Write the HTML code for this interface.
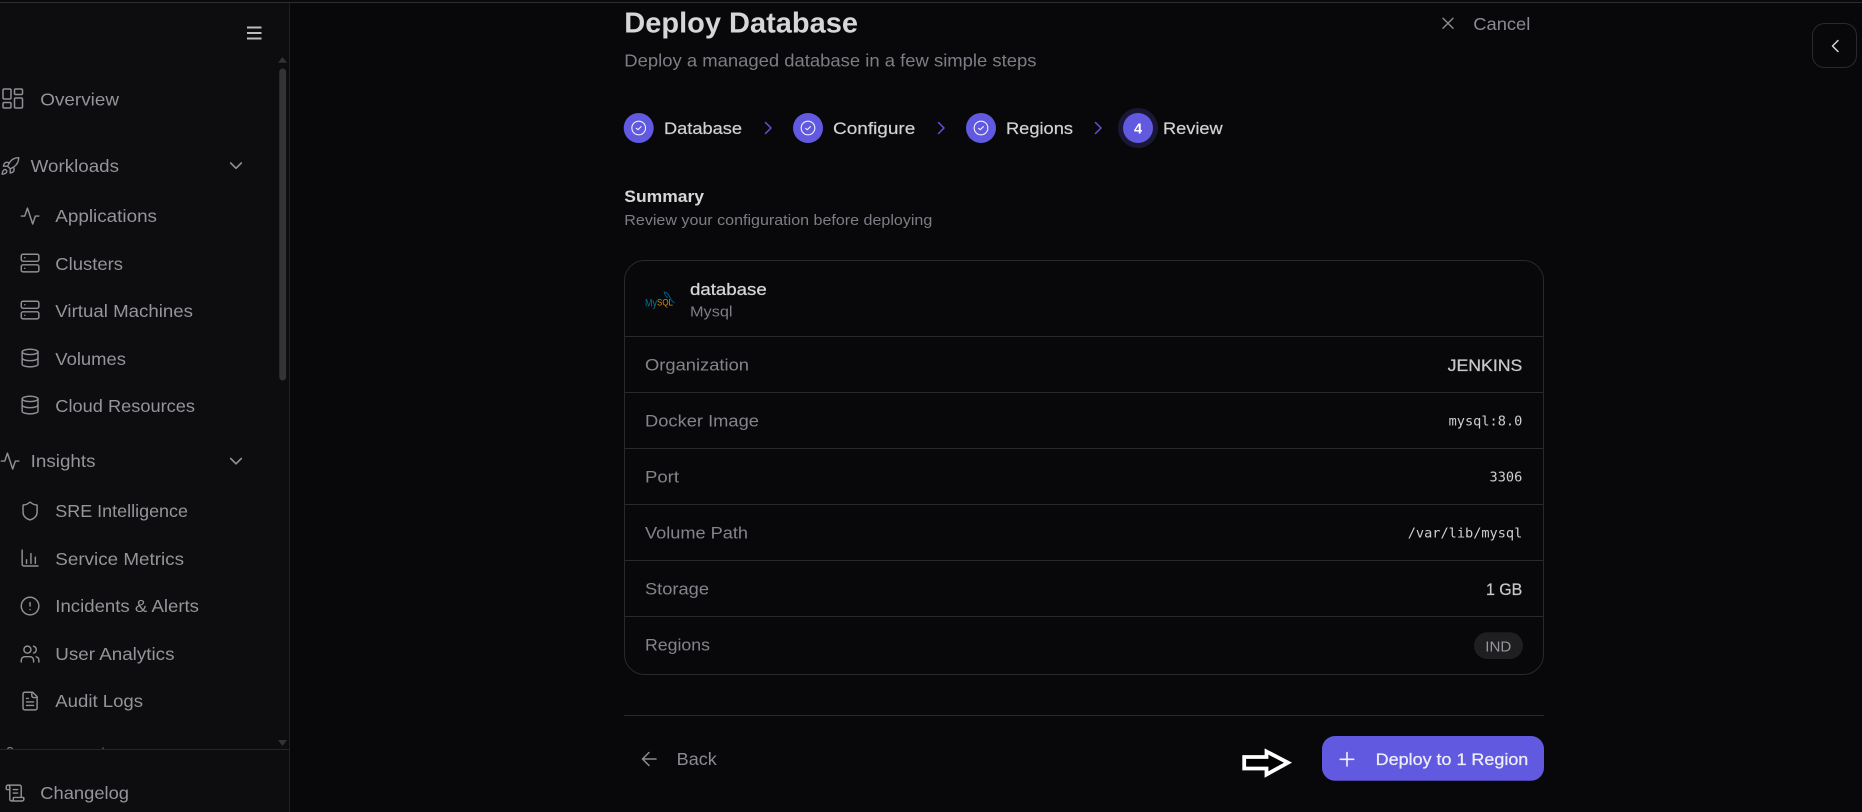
<!DOCTYPE html>
<html lang="en">
<head>
<meta charset="utf-8">
<title>Deploy Database</title>
<style>
html,body{margin:0;padding:0;background:#08080a;width:1862px;height:812px;overflow:hidden}
svg{display:block}
text{font-family:"Liberation Sans",sans-serif}
.nav{font-size:17.5px;fill:#94959b}
.ic{fill:none;stroke:#8f9095;stroke-width:1.65;stroke-linecap:round;stroke-linejoin:round}
.lab{font-size:17px;fill:#84858c}
.val{font-size:17px;fill:#c8c8ca;stroke:#c8c8ca;stroke-width:.25}
.mono{font-family:"DejaVu Sans Mono","Liberation Mono",monospace;font-size:13.6px;fill:#cfcfd1}
.step{font-size:17px;fill:#d2d2d4;stroke:#d2d2d4;stroke-width:.2}
.ln{stroke:#29292c;stroke-width:1}
.w{fill:none;stroke:#f2f2fa;stroke-width:1.6;stroke-linecap:round;stroke-linejoin:round}
.chev{fill:none;stroke:#5d55d8;stroke-width:1.5;stroke-linecap:round;stroke-linejoin:round}
</style>
</head>
<body>
<svg xmlns="http://www.w3.org/2000/svg" width="1862" height="812" viewBox="0 0 1862 812">
<defs>
<g id="activity"><polyline points="22 12 18 12 15 21 9 3 6 12 2 12"/></g>
<g id="server"><rect width="20" height="8" x="2" y="2" rx="2"/><rect width="20" height="8" x="2" y="14" rx="2"/><line x1="6" y1="6" x2="6.01" y2="6"/><line x1="6" y1="18" x2="6.01" y2="18"/></g>
<g id="db"><ellipse cx="12" cy="5" rx="9" ry="3"/><path d="M3 5V19A9 3 0 0 0 21 19V5"/><path d="M3 12A9 3 0 0 0 21 12"/></g>
<g id="check"><circle cx="12" cy="12" r="10"/><path d="m8.5 12.5 2.5 2 4.5-4.5"/></g>
</defs>

<rect width="1862" height="812" fill="#08080a"/>
<rect x="0" y="0" width="290" height="812" fill="#0d0d0f"/>
<rect x="289" y="0" width="1" height="812" fill="#1f1f22"/>
<rect x="0" y="0" width="1862" height="2" fill="#0a0a0c"/>
<rect x="0" y="2" width="1862" height="1" fill="#2e2e30"/>

<!-- Hamburger -->
<path d="M247 27.5h14.5M247 33h14.5M247 38.5h14.5" fill="none" stroke="#bcbcbe" stroke-width="1.9"/>

<!-- Scrollbar -->
<rect x="279.3" y="68.5" width="6.8" height="312" rx="3.4" fill="#343436"/>
<path d="M278 62.7h9l-4.5-5.7z" fill="#333335"/>
<path d="M278 740h9l-4.5 6z" fill="#333335"/>

<!-- Nav text -->
<text class="nav" x="40.3" y="105.5" textLength="78.7" lengthAdjust="spacingAndGlyphs">Overview</text>
<text class="nav" x="30.7" y="172" textLength="88.3" lengthAdjust="spacingAndGlyphs">Workloads</text>
<text class="nav" x="55.3" y="222" textLength="101.7" lengthAdjust="spacingAndGlyphs">Applications</text>
<text class="nav" x="55.3" y="270" textLength="67.7" lengthAdjust="spacingAndGlyphs">Clusters</text>
<text class="nav" x="55.3" y="317" textLength="137.7" lengthAdjust="spacingAndGlyphs">Virtual Machines</text>
<text class="nav" x="55.3" y="365" textLength="70.7" lengthAdjust="spacingAndGlyphs">Volumes</text>
<text class="nav" x="55.3" y="412" textLength="139.7" lengthAdjust="spacingAndGlyphs">Cloud Resources</text>
<text class="nav" x="30.7" y="467" textLength="64.8" lengthAdjust="spacingAndGlyphs">Insights</text>
<text class="nav" x="55.3" y="517" textLength="132.7" lengthAdjust="spacingAndGlyphs">SRE Intelligence</text>
<text class="nav" x="55.3" y="565" textLength="128.7" lengthAdjust="spacingAndGlyphs">Service Metrics</text>
<text class="nav" x="55.3" y="612" textLength="143.7" lengthAdjust="spacingAndGlyphs">Incidents &amp; Alerts</text>
<text class="nav" x="55.3" y="660" textLength="119.2" lengthAdjust="spacingAndGlyphs">User Analytics</text>
<text class="nav" x="55.3" y="707" textLength="87.7" lengthAdjust="spacingAndGlyphs">Audit Logs</text>
<text class="nav" x="40.3" y="799" textLength="88.7" lengthAdjust="spacingAndGlyphs">Changelog</text>

<!-- Nav icons -->
<g class="ic" transform="translate(0.5,86.5)"><rect x="2.5" y="2.5" width="8" height="10" rx="1.2" stroke-width="1.5"/><rect x="14" y="2.5" width="8" height="5.5" rx="1.2" stroke-width="1.5"/><rect x="14" y="11.5" width="8" height="10" rx="1.2" stroke-width="1.5"/><rect x="2.5" y="16" width="8" height="5.5" rx="1.2" stroke-width="1.5"/></g>
<g class="ic" transform="translate(0,156) scale(.85)" stroke-width="1.7"><path d="M4.5 16.5c-1.5 1.26-2 5-2 5s3.74-.5 5-2c.71-.84.7-2.13-.09-2.91a2.18 2.18 0 0 0-2.91-.09z"/><path d="m12 15-3-3a22 22 0 0 1 2-3.95A12.88 12.88 0 0 1 22 2c0 2.72-.78 7.5-6 11a22.35 22.35 0 0 1-4 2z"/><path d="M9 12H4s.55-3.03 2-4c1.62-1.08 5 0 5 0"/><path d="M12 15v5s3.03-.55 4-2c1.08-1.62 0-5 0-5"/></g>
<use href="#activity" class="ic" transform="translate(19.5,205.5) scale(.88)"/>
<use href="#server" class="ic" transform="translate(19.5,252.5) scale(.88)"/>
<use href="#server" class="ic" transform="translate(19.5,299.5) scale(.88)"/>
<use href="#db" class="ic" transform="translate(19.5,347.5) scale(.88)"/>
<use href="#db" class="ic" transform="translate(19.5,394.5) scale(.88)"/>
<use href="#activity" class="ic" transform="translate(-0.5,450.5) scale(.88)"/>
<g class="ic" transform="translate(19.5,500.5) scale(.88)"><path d="M20 13c0 5-3.5 7.5-7.66 8.95a1 1 0 0 1-.67-.01C7.5 20.5 4 18 4 13V6a1 1 0 0 1 1-1c2 0 4.5-1.2 6.24-2.72a1.17 1.17 0 0 1 1.52 0C14.51 3.81 17 5 19 5a1 1 0 0 1 1 1z"/></g>
<g class="ic" transform="translate(19.5,547.5) scale(.88)"><path d="M3 3v16a2 2 0 0 0 2 2h16"/><path d="M8 18v-4M13 18V7M18 18v-7"/></g>
<g class="ic" transform="translate(19.5,595.5) scale(.88)"><circle cx="12" cy="12" r="10"/><line x1="12" y1="8" x2="12" y2="12"/><line x1="12" y1="16" x2="12.01" y2="16"/></g>
<g class="ic" transform="translate(19.5,643.5) scale(.88)"><path d="M16 21v-2a4 4 0 0 0-4-4H6a4 4 0 0 0-4 4v2"/><circle cx="9" cy="7" r="4"/><path d="M22 21v-2a4 4 0 0 0-3-3.87"/><path d="M16 3.13a4 4 0 0 1 0 7.75"/></g>
<g class="ic" transform="translate(19.5,690.5) scale(.88)"><path d="M15 2H6a2 2 0 0 0-2 2v16a2 2 0 0 0 2 2h12a2 2 0 0 0 2-2V7Z"/><path d="M14 2v4a2 2 0 0 0 2 2h4"/><path d="M10 9H8"/><path d="M16 13H8"/><path d="M16 17H8"/></g>
<g class="ic" transform="translate(4.5,782.5) scale(.88)"><path d="M15 12h-5"/><path d="M15 8h-5"/><path d="M19 17V5a2 2 0 0 0-2-2H4"/><path d="M8 21h12a2 2 0 0 0 2-2v-1a1 1 0 0 0-1-1H11a1 1 0 0 0-1 1v1a2 2 0 1 1-4 0V5a2 2 0 1 0-4 0v2a1 1 0 0 0 1 1h3"/></g>

<!-- Section chevrons -->
<path d="M230.7 163l5.3 5.3 5.3-5.3" class="ic" stroke-width="1.3"/>
<path d="M230.7 458.5l5.3 5.3 5.3-5.3" class="ic" stroke-width="1.3"/>

<!-- Clipped next group sliver + footer divider -->
<path d="M7.5 749c1-2 4-2 5 0" fill="none" stroke="#77777c" stroke-width="1.3"/>
<rect x="102.5" y="747.5" width="1.2" height="1.5" fill="#66666a"/>
<rect x="0" y="749" width="289" height="1" fill="#252528"/>

<!-- Header -->
<text x="624.3" y="32.5" font-size="29" font-weight="700" fill="#d6d6d8" textLength="233.7" lengthAdjust="spacingAndGlyphs">Deploy Database</text>
<text x="624.3" y="66.7" font-size="17.5" fill="#7d7e85" textLength="412.2" lengthAdjust="spacingAndGlyphs">Deploy a managed database in a few simple steps</text>
<path d="M1443 18.3l10 10M1453 18.3l-10 10" fill="none" stroke="#8b8b90" stroke-width="1.4" stroke-linecap="round"/>
<text x="1473.3" y="30" font-size="17.5" fill="#8a8b93" textLength="57" lengthAdjust="spacingAndGlyphs">Cancel</text>

<!-- Collapse button -->
<rect x="1812.5" y="23.5" width="44" height="44" rx="12" fill="#08080a" stroke="#2a2a2d" stroke-width="1"/>
<path d="M1838 40.5l-5.5 5.5 5.5 5.5" fill="none" stroke="#d4d4d6" stroke-width="1.5" stroke-linecap="round" stroke-linejoin="round"/>

<!-- Stepper -->
<circle cx="638.7" cy="128" r="15" fill="#6159e0"/>
<use href="#check" class="w" transform="translate(630.5,119.8) scale(.683)" stroke-width="2"/>
<text class="step" x="664" y="134" textLength="78" lengthAdjust="spacingAndGlyphs">Database</text>
<path d="M765.5 122.5l5.5 5.5-5.5 5.5" class="chev"/>

<circle cx="808" cy="128" r="15" fill="#6159e0"/>
<use href="#check" class="w" transform="translate(799.8,119.8) scale(.683)" stroke-width="2"/>
<text class="step" x="833" y="134" textLength="82.3" lengthAdjust="spacingAndGlyphs">Configure</text>
<path d="M938.5 122.5l5.5 5.5-5.5 5.5" class="chev"/>

<circle cx="981" cy="128" r="15" fill="#6159e0"/>
<use href="#check" class="w" transform="translate(972.8,119.8) scale(.683)" stroke-width="2"/>
<text class="step" x="1006" y="134" textLength="67" lengthAdjust="spacingAndGlyphs">Regions</text>
<path d="M1095.5 122.5l5.5 5.5-5.5 5.5" class="chev"/>

<circle cx="1138" cy="128" r="20" fill="#1a1836"/>
<circle cx="1138" cy="128" r="15" fill="#6159e0"/>
<text x="1138" y="133.3" font-size="14.5" font-weight="700" fill="#ffffff" text-anchor="middle">4</text>
<text class="step" x="1163" y="134" textLength="59.6" lengthAdjust="spacingAndGlyphs">Review</text>

<!-- Summary -->
<text x="624.3" y="202" font-size="17" font-weight="700" fill="#d6d6d8" textLength="79.7" lengthAdjust="spacingAndGlyphs">Summary</text>
<text x="624.3" y="225" font-size="14.5" fill="#7d7e85" textLength="308" lengthAdjust="spacingAndGlyphs">Review your configuration before deploying</text>

<!-- Card -->
<rect x="624.5" y="260.5" width="919" height="414" rx="20" fill="#08080a" stroke="#29292c" stroke-width="1"/>
<path class="ln" d="M625 336.5H1543M625 392.5H1543M625 448.5H1543M625 504.5H1543M625 560.5H1543M625 616.5H1543"/>

<!-- MySQL logo -->
<path d="M664 292c2.6.3 4.4 2 5.6 4.8.9 2.3 2.4 4.600 5 6.200M664 292c.6 2.6 2.200 4.400 3.600 6" fill="none" stroke="#00618a" stroke-width=".9"/>
<text x="645" y="306.300" font-size="11" fill="#00749e" textLength="12" lengthAdjust="spacingAndGlyphs">My</text>
<text x="657" y="305.500" font-size="9.500" fill="#d98a00" textLength="16" lengthAdjust="spacingAndGlyphs">SQL</text>

<text x="690" y="295" font-size="17" fill="#d6d6d8" stroke="#d6d6d8" stroke-width=".25" textLength="76.7" lengthAdjust="spacingAndGlyphs">database</text>
<text x="690" y="316.7" font-size="15" fill="#7d7e85" textLength="42.5" lengthAdjust="spacingAndGlyphs">Mysql</text>

<text class="lab" x="645" y="370.7" textLength="104" lengthAdjust="spacingAndGlyphs">Organization</text>
<text class="lab" x="645" y="426.7" textLength="114" lengthAdjust="spacingAndGlyphs">Docker Image</text>
<text class="lab" x="645" y="482.7" textLength="34" lengthAdjust="spacingAndGlyphs">Port</text>
<text class="lab" x="645" y="538.7" textLength="103" lengthAdjust="spacingAndGlyphs">Volume Path</text>
<text class="lab" x="645" y="594.7" textLength="64" lengthAdjust="spacingAndGlyphs">Storage</text>
<text class="lab" x="645" y="650.7" textLength="65" lengthAdjust="spacingAndGlyphs">Regions</text>

<text class="val" x="1447.7" y="371" font-size="16.5" textLength="74.6" lengthAdjust="spacingAndGlyphs">JENKINS</text>
<text class="mono" x="1522.3" y="425.7" text-anchor="end">mysql:8.0</text>
<text class="mono" x="1522.3" y="481.3" text-anchor="end">3306</text>
<text class="mono" x="1522.3" y="537.3" text-anchor="end">/var/lib/mysql</text>
<text class="val" x="1486" y="595" textLength="36.3" lengthAdjust="spacingAndGlyphs">1 GB</text>
<rect x="1474" y="632.3" width="49" height="26.7" rx="13.3" fill="#1f1f22"/>
<text x="1485.3" y="651.7" font-size="14.5" fill="#96969b" textLength="26" lengthAdjust="spacingAndGlyphs">IND</text>

<!-- Footer -->
<rect x="624" y="715" width="920" height="1" fill="#29292c"/>
<path d="M656 759h-13M649 752.5l-6.5 6.5 6.5 6.5" fill="none" stroke="#8b8b90" stroke-width="1.5" stroke-linecap="round" stroke-linejoin="round"/>
<text x="676.7" y="765" font-size="17.5" fill="#8a8b93" textLength="40" lengthAdjust="spacingAndGlyphs">Back</text>

<!-- White annotation arrow -->
<path d="M1244.200 757H1266.500V751.500L1288 762.700L1266.500 774.500V768.500H1244.200Z" fill="#000" stroke="#fff" stroke-width="3.800"/>

<!-- Deploy button -->
<rect x="1322" y="736" width="222" height="44.7" rx="13" fill="#6159e0"/>
<path d="M1347 752.5v13.5M1340.2 759.3h13.5" fill="none" stroke="#f2f2fa" stroke-width="1.6" stroke-linecap="round"/>
<text x="1375.7" y="765" font-size="17" fill="#eeeefa" stroke="#eeeefa" stroke-width=".25" textLength="152.6" lengthAdjust="spacingAndGlyphs">Deploy to 1 Region</text>
</svg>
</body>
</html>
